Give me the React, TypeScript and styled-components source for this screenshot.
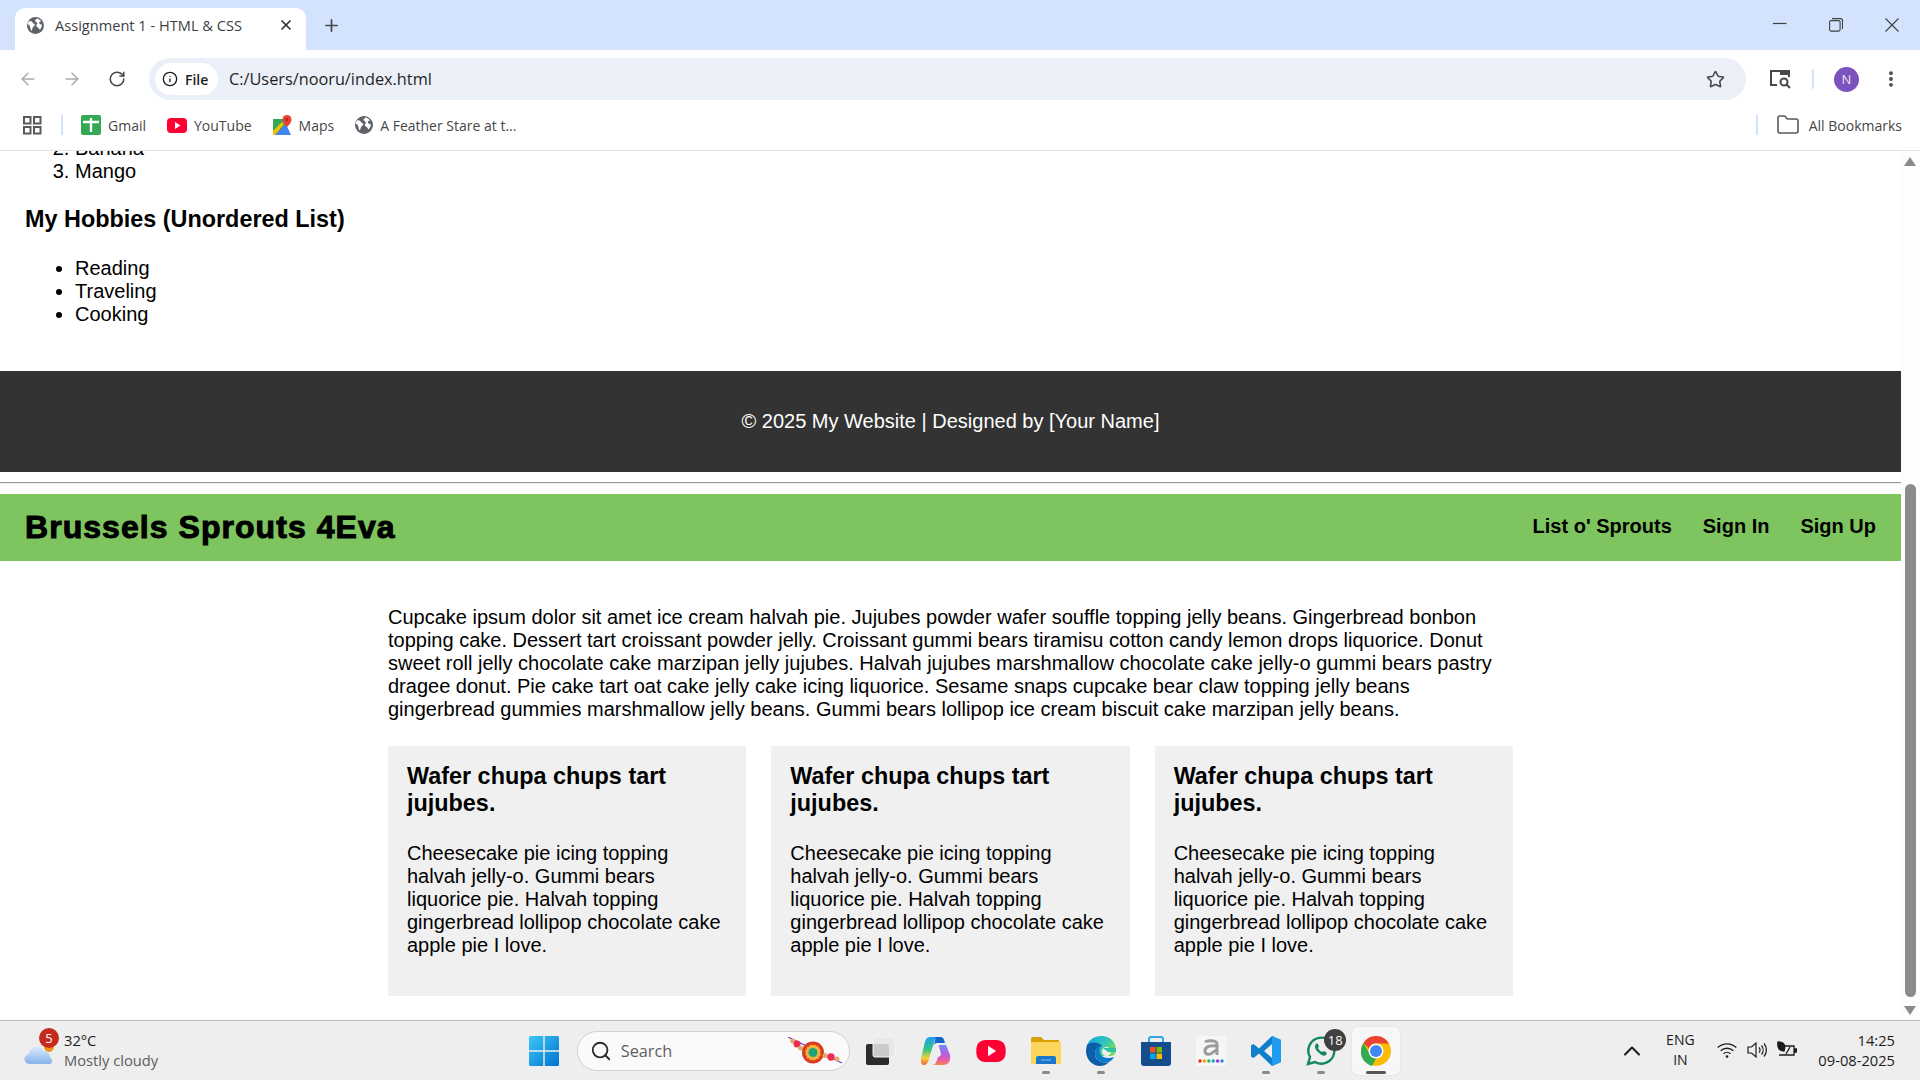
import React from "react";
import styled, { createGlobalStyle } from "styled-components";
import { ArrowLeft, ArrowRight, RotateCw, Info, Star, EllipsisVertical, Folder, X, Plus, Search, ChevronUp } from "lucide-react";

const GlobalStyle = createGlobalStyle`
  html, body {
    margin: 0;
    padding: 0;
    overflow: hidden;
    background: #fff;
  }
  * { box-sizing: border-box; }
`;

const UI_FONT = `"Open Sans", "Noto Sans", sans-serif`;
const PAGE_FONT = `"Liberation Sans", Arial, sans-serif`;

const Screen = styled.div`
  width: 1920px;
  height: 1080px;
  display: flex;
  flex-direction: column;
  overflow: hidden;
  font-family: ${UI_FONT};
`;

const TabStrip = styled.div`
  height: 50px;
  flex: none;
  background: #d3e3fd;
  display: flex;
  align-items: flex-end;
  padding-left: 15px;
`;

const Tab = styled.div`
  width: 291px;
  height: 42px;
  background: #fff;
  border-radius: 10px 10px 0 0;
  display: flex;
  align-items: center;
  padding: 0 12px 8px 12px;
  font-size: 14.6px;
  color: #3c4043;
`;

const TabTitle = styled.span`
  margin-left: 11px;
  flex: 1;
`;

const NewTab = styled.div`
  margin: 0 0 7px 16px;
  height: 35px;
  display: flex;
  align-items: center;
  color: #474a4f;
`;

const WindowControls = styled.div`
  margin-left: auto;
  height: 50px;
  display: flex;
  align-items: center;
  gap: 42px;
  padding: 0 21px 1px 0;
`;

const Toolbar = styled.div`
  height: 58px;
  flex: none;
  display: flex;
  align-items: center;
  background: #fff;
  padding: 0 18px 0 17px;
`;

const NavIcon = styled.div<{ $dim?: boolean }>`
  width: 22px;
  display: flex;
  justify-content: center;
  margin-right: 22px;
  color: ${({ $dim }) => ($dim ? "#a9abad" : "#45484c")};
`;

const ReloadIcon = styled(NavIcon)`
  margin: 0 22px 0 1px;
`;

const Omnibox = styled.div`
  width: 1597px;
  height: 42px;
  flex: none;
  margin-left: -1px;
  border-radius: 21px;
  background: #ebf0f8;
  display: flex;
  align-items: center;
  padding: 0 21px 0 6px;
`;

const ChipFile = styled.div`
  height: 32px;
  width: 63px;
  background: #fff;
  border-radius: 16px;
  display: flex;
  align-items: center;
  gap: 7px;
  padding-left: 7px;
  font-size: 14px;
  font-weight: 600;
  color: #1f1f1f;
`;

const Url = styled.span`
  margin-left: 11px;
  font-size: 16.3px;
  color: #1f1f1f;
  flex: 1;
`;

const ToolRight = styled.div`
  display: flex;
  align-items: center;
  margin-left: 23px;
  color: #45484c;
`;

const Divider = styled.div`
  width: 2px;
  height: 20px;
  background: #d3e3fd;
  border-radius: 1px;
  margin: 0 20px 0 21px;
`;

const Avatar = styled.div`
  width: 25px;
  height: 25px;
  border-radius: 50%;
  background: #7b53bd;
  color: #e8e0f5;
  font-size: 13px;
  display: flex;
  align-items: center;
  justify-content: center;
  margin-right: 22px;
`;

const Bookmarks = styled.div`
  height: 43px;
  flex: none;
  background: #fff;
  border-bottom: 1px solid #e3e3e3;
  display: flex;
  align-items: center;
  padding: 0 18px 8px 23px;
  font-size: 14px;
  color: #474747;
`;

const BookmarkDivider = styled.div`
  width: 2px;
  height: 20px;
  background: #d3e3fd;
  margin: 0 18px 0 19px;
`;

const Bookmark = styled.div`
  display: flex;
  align-items: center;
  gap: 7px;
  margin-right: 21px;
`;

const AllBookmarks = styled(Bookmark)`
  margin: 0;
  gap: 9px;
`;

const BookmarkEnd = styled.div`
  margin-left: auto;
  display: flex;
  align-items: center;
`;

const ContentRow = styled.div`
  flex: 1;
  min-height: 0;
  display: flex;
  background: #fff;
`;

const Viewport = styled.div`
  flex: 1;
  min-width: 0;
  overflow: hidden;
  font-family: ${PAGE_FONT};
  font-size: 20px;
  line-height: 23px;
  color: #000;
`;

const ScrolledPage = styled.div`
  margin-top: -37px;
`;

const Section = styled.section`
  padding: 0 25px 45px;
`;

const ListBlock = styled.ol`
  margin: 0;
  padding-left: 50px;
`;

const BulletList = styled.ul`
  margin: 0;
  padding-left: 50px;
`;

const SectionTitle = styled.h3`
  margin: 23.4px 0;
  font-size: 23.4px;
  line-height: 27px;
`;

const Footer = styled.footer`
  height: 101px;
  background: #333;
  color: #fff;
  display: flex;
  align-items: center;
  justify-content: center;
`;

const Rule = styled.hr`
  margin: 10px 0;
  border: 0;
  border-top: 1px solid #999;
  border-bottom: 1px solid #eee;
`;

const SiteHeader = styled.header`
  height: 67px;
  background: #7ec55f;
  display: flex;
  align-items: center;
  justify-content: space-between;
  padding: 0 25px;
`;

const SiteTitle = styled.h1`
  margin: 0;
  font-size: 32px;
  line-height: 37px;
  font-weight: 700;
  letter-spacing: 1.05px;
  -webkit-text-stroke: 1px #000;
`;

const SiteNav = styled.nav`
  display: flex;
  gap: 31px;
  font-weight: 700;
  padding-bottom: 2px;
`;

const Main = styled.main`
  width: 1125px;
  margin: 45px auto 0;
`;

const Lead = styled.p`
  margin: 0 0 25px;
`;

const Cards = styled.div`
  display: grid;
  grid-template-columns: repeat(3, 1fr);
  gap: 25px;
`;

const Card = styled.article`
  height: 250px;
  background: #f0f0f0;
  padding: 17px 19px;
`;

const CardTitle = styled.h3`
  margin: 0 0 25px;
  font-size: 23.4px;
  line-height: 27px;
`;

const CardText = styled.p`
  margin: 0;
`;

const Scrollbar = styled.div`
  width: 19px;
  flex: none;
  background: #fdfdfd;
  position: relative;
`;

const Thumb = styled.div`
  position: absolute;
  left: 4px;
  top: 333px;
  width: 11px;
  height: 513px;
  border-radius: 6px;
  background: #8b8b8b;
`;

const ArrowUp = styled.div`
  position: absolute;
  left: 3px;
  top: 6px;
  width: 0;
  height: 0;
  border-left: 6.5px solid transparent;
  border-right: 6.5px solid transparent;
  border-bottom: 9px solid #8b8b8b;
`;

const ArrowDown = styled(ArrowUp)`
  top: auto;
  bottom: 5px;
  border-bottom: 0;
  border-top: 9px solid #8b8b8b;
`;

const Taskbar = styled.div`
  height: 60px;
  flex: none;
  background: #eee;
  border-top: 1px solid #bdbdbd;
  display: grid;
  grid-template-columns: 1fr auto 1fr;
  align-items: center;
  font-size: 14.7px;
  color: #1c1c1c;
`;

const Weather = styled.div`
  display: flex;
  align-items: center;
  padding-left: 24px;
  position: relative;
`;

const WeatherBadge = styled.div`
  position: absolute;
  left: 39px;
  top: -2px;
  width: 20px;
  height: 20px;
  border-radius: 50%;
  background: #c42b1c;
  color: #fff;
  font-size: 13px;
  display: flex;
  align-items: center;
  justify-content: center;
`;

const WeatherText = styled.div`
  margin-left: 8px;
  line-height: 20px;
  padding-bottom: 2px;
`;

const WeatherSub = styled.div`
  color: #5d5d5d;
`;

const Dock = styled.div`
  display: flex;
  align-items: center;
`;

const SearchBox = styled.div`
  width: 273px;
  height: 40px;
  margin: 0 3.5px 0 5px;
  border-radius: 20px;
  border: 1px solid #d2d2d2;
  background: #fafafa;
  display: flex;
  align-items: center;
  padding-left: 12px;
  color: #5f5f5f;
  font-size: 16.3px;
  position: relative;
`;

const SearchLabel = styled.span`
  margin-left: 9px;
`;

const Rakhi = styled.svg`
  position: absolute;
  right: 5px;
  top: 5px;
`;

const DockItem = styled.div<{ $active?: boolean; $running?: boolean }>`
  width: 55px;
  height: 48px;
  flex: none;
  display: flex;
  align-items: center;
  justify-content: center;
  position: relative;
  &::before {
    content: "";
    display: ${({ $active }) => ($active ? "block" : "none")};
    position: absolute;
    inset: 0 3.5px;
    border-radius: 5px;
    background: #f7f7f7;
    box-shadow: 0 0 1px rgba(0, 0, 0, 0.25);
  }
  &::after {
    content: "";
    display: ${({ $running, $active }) => ($running || $active ? "block" : "none")};
    position: absolute;
    bottom: 1px;
    left: 50%;
    transform: translateX(-50%);
    width: ${({ $active }) => ($active ? "20px" : "8px")};
    height: 3px;
    border-radius: 2px;
    background: ${({ $active }) => ($active ? "#555" : "#8a8a8a")};
  }
  svg {
    position: relative;
  }
`;

const CountBadge = styled.div`
  position: absolute;
  left: 31px;
  top: 2px;
  width: 22px;
  height: 22px;
  border-radius: 50%;
  background: #404040;
  color: #fff;
  font-size: 13px;
  display: flex;
  align-items: center;
  justify-content: center;
`;

const Tray = styled.div`
  justify-self: end;
  display: flex;
  align-items: center;
  padding-right: 25px;
`;

const Lang = styled.div`
  width: 40px;
  margin: 0 17px 0 14px;
  text-align: center;
  font-size: 14px;
  line-height: 20px;
  padding-bottom: 2px;
`;

const TrayIcons = styled.div`
  display: flex;
  align-items: center;
  gap: 10px;
  margin-right: 21px;
  padding-bottom: 2px;
`;

const Clock = styled.div`
  text-align: right;
  line-height: 20px;
  padding-bottom: 2px;
`;

const GlobeIcon = ({ size = 17 }: { size?: number }) => (
  <svg width={size} height={size} viewBox="0 0 24 24">
    <circle cx="12" cy="12" r="12" fill="#5f6368" />
    <path
      d="M3 6c2-1 4 0 5 2s3 1 3 3-2 2-3 4-1 5-2 4-1-4-2-6-2-2-3-3 1-3 2-4zM14 2c2 0 5 2 6 4l-3 1 1 3 3 1c0 3-1 5-3 7l-2-3-2-1-1-3 2-2-2-2-2-2z"
      fill="#fff"
    />
  </svg>
);

const GmailIcon = () => (
  <svg width="20" height="20" viewBox="0 0 20 20">
    <rect width="20" height="20" rx="2" fill="#34a853" />
    <path d="M2 7h16M10 3v14" stroke="#fff" strokeWidth="2.4" />
  </svg>
);

const YoutubeIcon = ({ w = 20, h = 15, r = 4 }: { w?: number; h?: number; r?: number }) => (
  <svg width={w} height={h} viewBox="0 0 20 15">
    <rect width="20" height="15" rx={r} fill="#ff0033" />
    <path d="M8 4l5.5 3.5L8 11z" fill="#fff" />
  </svg>
);

const MapsIcon = () => (
  <svg width="19" height="20" viewBox="0 0 19 20">
    <path d="M0 4h13v16H0z" fill="#34a853" />
    <path d="M2 20L13 9l5 11z" fill="#4285f4" />
    <path d="M0 16L9 7l2 2L2 20H0z" fill="#fbbc04" />
    <path d="M14 0a4.500 4.500 0 0 1 4.500 4.500C18.500 8 14 12 14 12S9.500 8 9.500 4.500A4.500 4.500 0 0 1 14 0z" fill="#ea4335" />
    <circle cx="14" cy="4.500" r="1.500" fill="#a52714" />
  </svg>
);

const AppsIcon = () => (
  <svg width="19" height="19" viewBox="0 0 19 19" fill="none" stroke="#5a5a5a" strokeWidth="2">
    <rect x="1" y="1" width="6.500" height="6.500" />
    <rect x="11" y="1" width="6.500" height="6.500" />
    <rect x="1" y="11" width="6.500" height="6.500" />
    <rect x="11" y="11" width="6.500" height="6.500" />
  </svg>
);

const MinimizeIcon = () => (
  <svg width="14" height="14" viewBox="0 0 14 14" stroke="#3d4043" strokeWidth="1.200">
    <path d="M0 5.500h13.500" />
  </svg>
);

const RestoreIcon = () => (
  <svg width="14" height="14" viewBox="0 0 14 14" fill="none" stroke="#3d4043" strokeWidth="1.100">
    <rect x="0.600" y="2.600" width="10.500" height="10.500" rx="1.500" />
    <path d="M3 .6h8.500a2 2 0 0 1 2 2V11" />
  </svg>
);

const ThinX = () => (
  <svg width="14" height="14" viewBox="0 0 14 14" stroke="#3d4043" strokeWidth="1.100">
    <path d="M.5.5l13 13M13.500.5l-13 13" />
  </svg>
);

const TabSearchIcon = () => (
  <svg width="22" height="20" viewBox="0 0 22 20" fill="none" stroke="#45484c" strokeWidth="2">
    <path d="M8 16H2V2h18v6" />
    <path d="M11 1h10v5H11z" fill="#45484c" stroke="none" />
    <circle cx="15" cy="13" r="3.500" />
    <path d="M17.500 15.500L21 19" />
  </svg>
);

const WeatherIcon = () => (
  <svg width="32" height="30" viewBox="0 0 32 30">
    <defs>
      <linearGradient id="cloudFill" x1="0" y1="0" x2="0" y2="1">
        <stop offset="0" stopColor="#dbe9fb" />
        <stop offset="1" stopColor="#86b3ea" />
      </linearGradient>
    </defs>
    <circle cx="25" cy="11" r="5" fill="#f0921e" />
    <path d="M6 28a5 5 0 0 1-1-10 8 8 0 0 1 15-3 6.500 6.500 0 0 1 6 6.500c3 1 3 6.500-1 6.500z" fill="url(#cloudFill)" />
  </svg>
);

const RakhiIcon = () => (
  <Rakhi width="56" height="30" viewBox="0 0 56 30">
    <path d="M0 0l54 26" stroke="#6a4cc0" strokeWidth="1.200" />
    <circle cx="4.700" cy="4" r="2.500" fill="#e0a96d" />
    <circle cx="9" cy="7" r="3.500" fill="#f02a50" />
    <circle cx="12.700" cy="11" r="2.500" fill="#e0a96d" />
    <circle cx="25" cy="15.500" r="11" fill="#d83a20" />
    <circle cx="25" cy="15.500" r="8" fill="#f3b23a" strokeDasharray="2 2" stroke="#e8421f" strokeWidth="1.500" />
    <circle cx="25" cy="15.500" r="4.500" fill="#1fa37a" />
    <circle cx="37" cy="18.500" r="2.500" fill="#e0a96d" />
    <circle cx="43" cy="20" r="3.700" fill="#f02a50" />
    <circle cx="49" cy="22" r="2.500" fill="#e0a96d" />
  </Rakhi>
);

const WindowsIcon = () => (
  <svg width="30" height="30" viewBox="0 0 30 30">
    <defs>
      <linearGradient id="winFill" x1="0" y1="0" x2="1" y2="1">
        <stop offset="0" stopColor="#3ec6f7" />
        <stop offset="1" stopColor="#0073d0" />
      </linearGradient>
    </defs>
    <path d="M0 1.500A1.500 1.500 0 0 1 1.500 0h12.800v14.300H0zM15.700 0h12.800A1.500 1.500 0 0 1 30 1.500v12.800H15.700zM0 15.700h14.300V30H1.500A1.500 1.500 0 0 1 0 28.500zM15.700 15.700H30v12.800a1.500 1.500 0 0 1-1.500 1.500H15.700z" fill="url(#winFill)" />
  </svg>
);

const TaskViewIcon = () => (
  <svg width="30" height="30" viewBox="0 0 30 30">
    <rect x="0" y="8" width="23" height="21" rx="2" fill="#2b2b2b" />
    <rect x="7" y="1" width="22" height="20" rx="2" fill="#e6e6e6" fillOpacity=".85" stroke="#f4f4f4" />
  </svg>
);

const CopilotIcon = () => (
  <svg width="30" height="30" viewBox="0 0 30 30">
    <defs>
      <linearGradient id="copLeft" x1="0" y1="0" x2="0" y2="1">
        <stop offset="0" stopColor="#1f9ef0" />
        <stop offset=".45" stopColor="#35c483" />
        <stop offset=".75" stopColor="#f3d23a" />
        <stop offset="1" stopColor="#f0643c" />
      </linearGradient>
      <linearGradient id="copRight" x1="0" y1="0" x2="0" y2="1">
        <stop offset="0" stopColor="#6f8cf2" />
        <stop offset=".45" stopColor="#b85ce0" />
        <stop offset=".8" stopColor="#ee5f9c" />
        <stop offset="1" stopColor="#f58a3c" />
      </linearGradient>
    </defs>
    <path d="M9 1h8c-2 0-3 2-4 5L8 23c-1 4-3 6-5 6-3 0-3.500-4-3-7L3 10C4 5 5 1 9 1z" fill="url(#copLeft)" />
    <path d="M14 1h6c2 0 3 2 4 6h-8c-2 0-3 1-4 3l2-5c0-2 1-4 0-4z" fill="#1565c8" />
    <path d="M18 9h7l4 10c1 5-1 10-7 10H11c3 0 4-2 5-5l1-3c1 0 3-1 3-3l-1-4c-1-2-1-4-1-5z" fill="url(#copRight)" />
  </svg>
);

const FilesIcon = () => (
  <svg width="30" height="27" viewBox="0 0 30 27">
    <path d="M0 2a2 2 0 0 1 2-2h8l3 3h15v8H0z" fill="#d9a006" />
    <path d="M0 5h30v22H0z" fill="#fdd45c" />
    <path d="M5 21a2 2 0 0 1 2-2h16a2 2 0 0 1 2 2v6H5z" fill="#1976c8" />
    <path d="M10 23h10" stroke="#7cc4f2" strokeWidth="1" />
  </svg>
);

const EdgeIcon = () => (
  <svg width="30" height="30" viewBox="0 0 30 30">
    <defs>
      <linearGradient id="edgeTop" x1="0" y1="0" x2="1" y2=".6">
        <stop offset="0" stopColor="#1b9de2" />
        <stop offset=".55" stopColor="#2cc4c0" />
        <stop offset="1" stopColor="#6fdc5c" />
      </linearGradient>
    </defs>
    <path d="M15 0c9 0 15 6 15 14 0 4-3 6-6 6H12C10 12 6 10 1 9 3 4 8 0 15 0z" fill="url(#edgeTop)" />
    <path d="M1 9C5 5 14 6 16 10c-4 0-7 4-7 8 0 6 7 10 14 8-3 3-6 4-9 4C6 30 0 23 0 15c0-2 .3-4 1-6z" fill="#0d5ea9" />
    <path d="M9 18c0-5 3-8 7-8-3 2-3 6-1 9 2 3 8 4 13 2-1 2-3 4-5 5-7 2-14-2-14-8z" fill="#0b7ccc" />
    <circle cx="20.500" cy="15.500" r="4.500" fill="#eee" />
    <path d="M17 12h13v4H22z" fill="#2cc4a0" />
  </svg>
);

const StoreIcon = () => (
  <svg width="30" height="30" viewBox="0 0 30 30">
    <path d="M8 7V3a2 2 0 0 1 2-2h10a2 2 0 0 1 2 2v4" fill="none" stroke="#2fa6e8" strokeWidth="2" />
    <path d="M0 6h30v21a3 3 0 0 1-3 3H3a3 3 0 0 1-3-3z" fill="#154d8c" />
    <rect x="9" y="11" width="5.500" height="5.500" fill="#f25022" />
    <rect x="15.500" y="11" width="5.500" height="5.500" fill="#7fba00" />
    <rect x="9" y="17.500" width="5.500" height="5.500" fill="#00a4ef" />
    <rect x="15.500" y="17.500" width="5.500" height="5.500" fill="#ffb900" />
  </svg>
);

const AmazonIcon = () => (
  <svg width="30" height="30" viewBox="0 0 30 30">
    <rect width="30" height="30" fill="#f6f6f6" />
    <path d="M9 6c2-2 12-2 12 2v11M21 10c-8-1-12 1-12 5s5 4 7 2 5-3 5-3" fill="none" stroke="#9b9b9b" strokeWidth="3" />
    {["#e22", "#f90", "#2b5", "#29c", "#93d", "#28e"].map((c, i) => (
      <circle key={c} cx={4 + i * 4.400} cy="25" r="1.700" fill={c} />
    ))}
  </svg>
);

const VsCodeIcon = () => (
  <svg width="30" height="30" viewBox="0 0 30 30">
    <path d="M21 0l9 4v22l-9 4L8 17.500 2.500 22 0 20.500V9.500L2.500 8 8 12.500zM21 8l-8 7 8 7z" fill="#0f7fcc" />
    <path d="M21 0l9 4v22l-9 4z" fill="#1f9cf0" />
  </svg>
);

const WhatsappIcon = () => (
  <svg width="30" height="30" viewBox="0 0 30 30">
    <path d="M2 28l2-7A13 13 0 1 1 9 26z" fill="none" stroke="#15875a" strokeWidth="2.400" />
    <path d="M10 8c-2 2-1 5 2 8s6 5 8 3l1-2-3-2-2 1c-2-1-3-2-4-4l1-2-2-3z" fill="#15875a" />
  </svg>
);

const ChromeIcon = () => (
  <svg width="30" height="30" viewBox="0 0 30 30">
    <circle cx="15" cy="15" r="15" fill="#fbbc04" />
    <path d="M15 0a15 15 0 0 1 13 7.500H15a7.500 7.500 0 0 0-7 5L2.500 7A15 15 0 0 1 15 0z" fill="#ea4335" />
    <path d="M2.500 7L9 18.500a7.500 7.500 0 0 0 6 4l-4 7.500A15 15 0 0 1 2.500 7z" fill="#34a853" />
    <circle cx="15" cy="15" r="7.500" fill="#fff" />
    <circle cx="15" cy="15" r="6" fill="#4285f4" />
  </svg>
);

const WifiIcon = () => (
  <svg width="20" height="18" viewBox="0 0 20 18" fill="none" stroke="#1c1c1c" strokeWidth="1.300">
    <path d="M.7 6.500a13.500 13.500 0 0 1 18.600 0M3.700 9.700a9.300 9.300 0 0 1 12.600 0M6.600 12.700a5 5 0 0 1 6.800 0" />
    <circle cx="10" cy="15.500" r="1.300" fill="#1c1c1c" stroke="none" />
  </svg>
);

const SpeakerIcon = () => (
  <svg width="20" height="18" viewBox="0 0 20 18" fill="none" stroke="#1c1c1c" strokeWidth="1.200">
    <path d="M1 6h3.500L9 2v14l-4.500-4H1z" />
    <path d="M12 6.500a3.500 3.500 0 0 1 0 5M14.500 4.500a7 7 0 0 1 0 9M17 2.500a10 10 0 0 1 0 13" />
  </svg>
);

const BatteryLeafIcon = () => (
  <svg width="20" height="18" viewBox="0 0 20 18" fill="none" stroke="#1c1c1c" strokeWidth="1.300">
    <path d="M6 5h11v9H2" />
    <path d="M17 8h2.500v3H17" fill="#1c1c1c" />
    <path d="M1 1c6 0 8 3 6 9-4 0-7-2-6-9z" fill="#1c1c1c" />
    <path d="M9 13l4-7" />
  </svg>
);

const paragraph =
  "Cupcake ipsum dolor sit amet ice cream halvah pie. Jujubes powder wafer souffle topping jelly beans. Gingerbread bonbon topping cake. Dessert tart croissant powder jelly. Croissant gummi bears tiramisu cotton candy lemon drops liquorice. Donut sweet roll jelly chocolate cake marzipan jelly jujubes. Halvah jujubes marshmallow chocolate cake jelly-o gummi bears pastry dragee donut. Pie cake tart oat cake jelly cake icing liquorice. Sesame snaps cupcake bear claw topping jelly beans gingerbread gummies marshmallow jelly beans. Gummi bears lollipop ice cream biscuit cake marzipan jelly beans.";

const cardText =
  "Cheesecake pie icing topping halvah jelly-o. Gummi bears liquorice pie. Halvah topping gingerbread lollipop chocolate cake apple pie I love.";

export default function App() {
  return (
    <Screen>
      <GlobalStyle />
      <TabStrip>
        <Tab>
          <GlobeIcon />
          <TabTitle>Assignment 1 - HTML &amp; CSS</TabTitle>
          <X size={16} strokeWidth={2.6} color="#303134" />
        </Tab>
        <NewTab>
          <Plus size={19} strokeWidth={2.2} />
        </NewTab>
        <WindowControls>
          <MinimizeIcon />
          <RestoreIcon />
          <ThinX />
        </WindowControls>
      </TabStrip>

      <Toolbar>
        <NavIcon $dim>
          <ArrowLeft size={20} strokeWidth={1.8} />
        </NavIcon>
        <NavIcon $dim>
          <ArrowRight size={20} strokeWidth={1.8} />
        </NavIcon>
        <ReloadIcon>
          <RotateCw size={18} strokeWidth={2.1} />
        </ReloadIcon>
        <Omnibox>
          <ChipFile>
            <Info size={16} strokeWidth={2} />
            File
          </ChipFile>
          <Url>C:/Users/nooru/index.html</Url>
          <Star size={19} strokeWidth={2} color="#45484c" />
        </Omnibox>
        <ToolRight>
          <TabSearchIcon />
          <Divider />
          <Avatar>N</Avatar>
          <EllipsisVertical size={20} strokeWidth={2.6} />
        </ToolRight>
      </Toolbar>

      <Bookmarks>
        <AppsIcon />
        <BookmarkDivider />
        <Bookmark>
          <GmailIcon />
          Gmail
        </Bookmark>
        <Bookmark>
          <YoutubeIcon />
          YouTube
        </Bookmark>
        <Bookmark>
          <MapsIcon />
          Maps
        </Bookmark>
        <Bookmark>
          <GlobeIcon size={18} />
          A Feather Stare at t...
        </Bookmark>
        <BookmarkEnd>
          <BookmarkDivider />
          <AllBookmarks>
            <Folder size={24} strokeWidth={1.6} color="#5a5a5a" />
            All Bookmarks
          </AllBookmarks>
        </BookmarkEnd>
      </Bookmarks>

      <ContentRow>
        <Viewport>
          <ScrolledPage>
            <Section>
              <ListBlock>
                <li>Apple</li>
                <li>Banana</li>
                <li>Mango</li>
              </ListBlock>
              <SectionTitle>My Hobbies (Unordered List)</SectionTitle>
              <BulletList>
                <li>Reading</li>
                <li>Traveling</li>
                <li>Cooking</li>
              </BulletList>
            </Section>
            <Footer>© 2025 My Website | Designed by [Your Name]</Footer>
            <Rule />
            <SiteHeader>
              <SiteTitle>Brussels Sprouts 4Eva</SiteTitle>
              <SiteNav>
                <span>List o' Sprouts</span>
                <span>Sign In</span>
                <span>Sign Up</span>
              </SiteNav>
            </SiteHeader>
            <Main>
              <Lead>{paragraph}</Lead>
              <Cards>
                {[0, 1, 2].map((i) => (
                  <Card key={i}>
                    <CardTitle>Wafer chupa chups tart jujubes.</CardTitle>
                    <CardText>{cardText}</CardText>
                  </Card>
                ))}
              </Cards>
            </Main>
          </ScrolledPage>
        </Viewport>
        <Scrollbar>
          <ArrowUp />
          <Thumb />
          <ArrowDown />
        </Scrollbar>
      </ContentRow>

      <Taskbar>
        <Weather>
          <WeatherIcon />
          <WeatherBadge>5</WeatherBadge>
          <WeatherText>
            32°C
            <WeatherSub>Mostly cloudy</WeatherSub>
          </WeatherText>
        </Weather>
        <Dock>
          <DockItem>
            <WindowsIcon />
          </DockItem>
          <SearchBox>
            <Search size={22} strokeWidth={2} color="#2b2b2b" />
            <SearchLabel>Search</SearchLabel>
            <RakhiIcon />
          </SearchBox>
          <DockItem>
            <TaskViewIcon />
          </DockItem>
          <DockItem>
            <CopilotIcon />
          </DockItem>
          <DockItem>
            <YoutubeIcon w={30} h={22} r={6} />
          </DockItem>
          <DockItem $running>
            <FilesIcon />
          </DockItem>
          <DockItem $running>
            <EdgeIcon />
          </DockItem>
          <DockItem>
            <StoreIcon />
          </DockItem>
          <DockItem>
            <AmazonIcon />
          </DockItem>
          <DockItem $running>
            <VsCodeIcon />
          </DockItem>
          <DockItem $running>
            <WhatsappIcon />
            <CountBadge>18</CountBadge>
          </DockItem>
          <DockItem $active>
            <ChromeIcon />
          </DockItem>
        </Dock>
        <Tray>
          <ChevronUp size={28} strokeWidth={1.8} />
          <Lang>
            ENG
            <br />
            IN
          </Lang>
          <TrayIcons>
            <WifiIcon />
            <SpeakerIcon />
            <BatteryLeafIcon />
          </TrayIcons>
          <Clock>
            14:25
            <br />
            09-08-2025
          </Clock>
        </Tray>
      </Taskbar>
    </Screen>
  );
}
